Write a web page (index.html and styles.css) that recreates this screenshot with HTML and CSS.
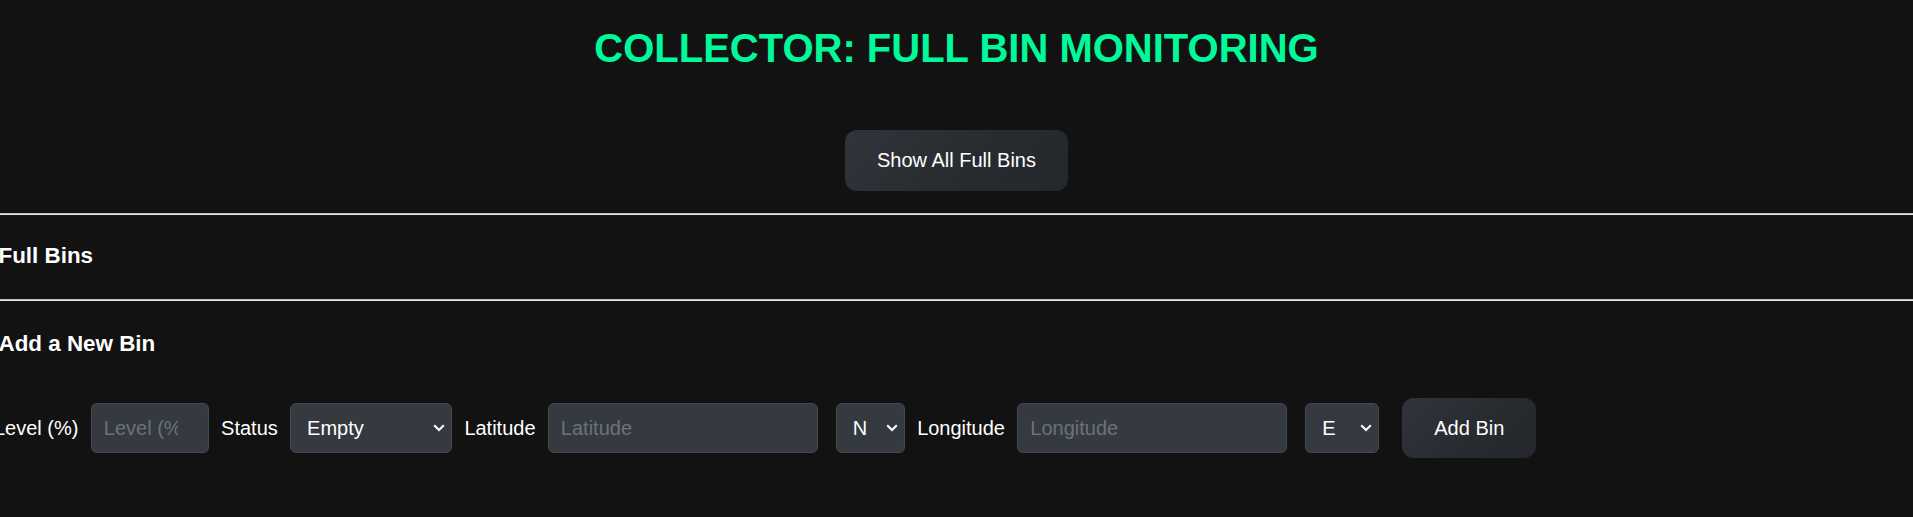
FILE: index.html
```html
<!DOCTYPE html>
<html lang="en">
<head>
<meta charset="utf-8">
<title>Collector: Full Bin Monitoring</title>
<link rel="stylesheet" href="styles.css">
</head>
<body>
<main class="page">
  <h1 class="title">COLLECTOR: FULL BIN MONITORING</h1>
  <div class="actions">
    <button class="btn btn-show" type="button">Show All Full Bins</button>
  </div>
  <hr class="divider divider-first">
  <section class="section">
    <h2 class="section-title">Full Bins</h2>
  </section>
  <hr class="divider">
  <section class="section">
    <h2 class="section-title">Add a New Bin</h2>
    <form class="bin-form">
      <label class="field-label" for="level">Level (%)</label>
      <input id="level" class="field field-level" type="text" placeholder="Level (%)">
      <label class="field-label" for="status">Status</label>
      <select id="status" class="select select-status">
        <option>Empty</option>
        <option>Half Full</option>
        <option>Full</option>
      </select>
      <label class="field-label" for="lat">Latitude</label>
      <input id="lat" class="field field-coord" type="text" placeholder="Latitude">
      <select class="select select-dir select-ns">
        <option>N</option>
        <option>S</option>
      </select>
      <label class="field-label" for="lng">Longitude</label>
      <input id="lng" class="field field-coord" type="text" placeholder="Longitude">
      <select class="select select-dir select-ew">
        <option>E</option>
        <option>W</option>
      </select>
      <button class="btn btn-add" type="button">Add Bin</button>
    </form>
  </section>
</main>
</body>
</html>
```

FILE: styles.css
```css
html, body {
  margin: 0;
  padding: 0;
  background: #121212;
}

body {
  color: #ffffff;
  font-family: "Liberation Sans", Arial, sans-serif;
  font-size: 20px;
}

.page {
  padding-top: 25px;
}

.title {
  margin: 0;
  font-size: 40px;
  line-height: 46px;
  font-weight: bold;
  color: #00fa9a;
  text-align: center;
}

.actions {
  margin-top: 59px;
  text-align: center;
}

.btn {
  font-family: "Liberation Sans", Arial, sans-serif;
  font-size: 20px;
  color: #ffffff;
  border: 0;
  border-radius: 12px;
  background: linear-gradient(135deg, #31353b 0%, #272a2f 60%, #24272b 100%);
  cursor: pointer;
}

.btn-show {
  padding: 19px 32px;
  line-height: 23px;
}

.btn-add {
  padding: 18px 32px;
  line-height: 24px;
  margin-left: 10.7px;
}

.divider {
  margin: 0;
  height: 0;
  border: 0;
  border-top: 1px solid #bdbdbd;
  border-bottom: 1px solid #e4e4e4;
}

.divider-first {
  margin-top: 22px;
}

.section {
  margin-top: 28px;
  margin-bottom: 30px;
}

.section-title {
  margin: 0 0 0 -1.5px;
  font-size: 22.4px;
  line-height: 26px;
  font-weight: bold;
}

.section + .divider + .section {
  margin-top: 30px;
}

.bin-form {
  display: flex;
  align-items: center;
  gap: 12.3px;
  margin-top: 41px;
  margin-left: -6px;
}

.field-label {
  font-size: 20px;
  line-height: 23px;
  white-space: nowrap;
}

.field,
.select {
  box-sizing: border-box;
  height: 50px;
  margin: 0;
  font-family: "Liberation Sans", Arial, sans-serif;
  font-size: 20px;
  color: #ffffff;
  background-color: #343a40;
  border: 1px solid #43494f;
  border-radius: 6px;
  outline: none;
}

.field {
  padding: 0 12px;
}

.field::placeholder {
  color: #6c7278;
  opacity: 1;
}

.field-level {
  width: 118px;
  padding-right: 30px;
}

.field-coord {
  width: 270px;
}

.select {
  appearance: none;
  -webkit-appearance: none;
  padding: 0 22px 0 16px;
  background-image: url("data:image/svg+xml,%3Csvg xmlns='http://www.w3.org/2000/svg' width='12' height='8' viewBox='0 0 12 8'%3E%3Cpath d='M1.2 1.2l4.8 4.8 4.8-4.8' fill='none' stroke='%23ffffff' stroke-width='2'/%3E%3C/svg%3E");
  background-repeat: no-repeat;
  background-position: right 6px center;
  background-size: 12px 8px;
}

.select-status {
  width: 162px;
}

.select-dir {
  margin-left: 5.7px;
}

.select-ns {
  width: 69px;
}

.select-ew {
  width: 74px;
}
```
